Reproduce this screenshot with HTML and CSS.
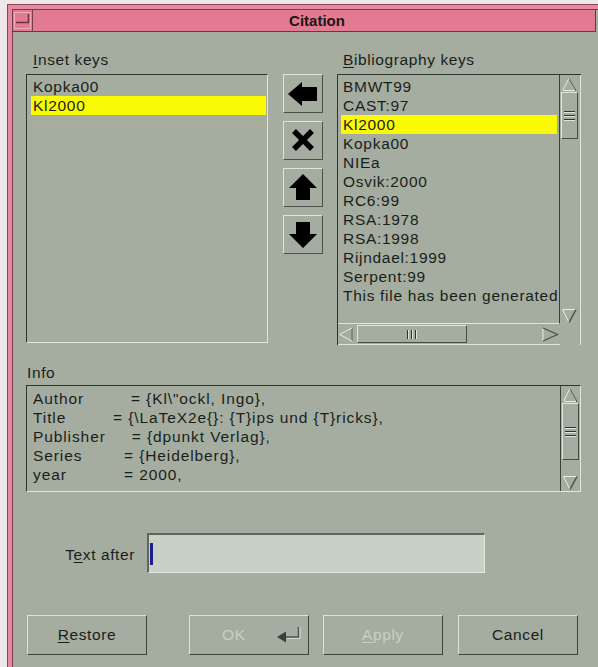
FILE: index.html
```html
<!DOCTYPE html>
<html lang="en">
<head>
<meta charset="utf-8">
<title>Citation</title>
<link rel="stylesheet" href="styles.css">
</head>
<body>
<div class="frame">
  <div class="window">
    <div class="titlebar">
      <div class="menu-btn">
        <svg width="19" height="21" viewBox="0 0 19 21">
          <rect x="1.5" y="2.5" width="16" height="16" fill="none" stroke="#f3a8b8"/>
          <path d="M3 12.5H16M15.5 4V12.5" stroke="#6e3444" stroke-width="1.5" fill="none"/>
        </svg>
      </div>
      <div class="title">Citation</div>
    </div>

    <div class="client">
      <div class="lists">
        <div class="inset-col">
          <div class="label"><u>I</u>nset keys</div>
          <div class="listbox inset">
            <div class="item">Kopka00</div>
            <div class="item sel">Kl2000</div>
            <div class="ghost-line"></div>
          </div>
        </div>

        <div class="tools">
          <button class="tool" type="button" aria-label="Add">
            <svg width="38" height="37" viewBox="0 0 38 37"><path d="M4 19L18 7V12H33V26H18V31Z" fill="#000"/></svg>
          </button>
          <button class="tool" type="button" aria-label="Delete">
            <svg width="38" height="37" viewBox="0 0 38 37"><path d="M10 9L28 27M28 9L10 27" stroke="#000" stroke-width="5.5" fill="none"/></svg>
          </button>
          <button class="tool" type="button" aria-label="Up">
            <svg width="38" height="37" viewBox="0 0 38 37"><path d="M19 5L33 19H26V31H12V19H5Z" fill="#000"/></svg>
          </button>
          <button class="tool" type="button" aria-label="Down">
            <svg width="38" height="37" viewBox="0 0 38 37"><path d="M19 32L33 18H26V6H12V18H5Z" fill="#000"/></svg>
          </button>
        </div>

        <div class="bib-col">
          <div class="label"><u>B</u>ibliography keys</div>
          <div class="scrollbox">
            <div class="listbox bib">
              <div class="item">BMWT99</div>
              <div class="item">CAST:97</div>
              <div class="item sel">Kl2000</div>
              <div class="item">Kopka00</div>
              <div class="item">NIEa</div>
              <div class="item">Osvik:2000</div>
              <div class="item">RC6:99</div>
              <div class="item">RSA:1978</div>
              <div class="item">RSA:1998</div>
              <div class="item">Rijndael:1999</div>
              <div class="item">Serpent:99</div>
              <div class="item">This file has been generated</div>
            </div>
            <div class="vscroll">
              <svg class="arrow" width="16" height="15" viewBox="0 0 16 15"><path d="M1.5 14V13.5L8 1.5" stroke="#e6ece3" fill="none"/><path d="M1.5 13.5H15L8 1.5" stroke="#5a6258" fill="none"/><path d="M2 13.5H14" stroke="#e6ece3"/></svg>
              <div class="thumb v"><span></span><span></span><span></span></div>
              <div class="trough"></div>
              <svg class="arrow" width="16" height="17" viewBox="0 0 16 17"><path d="M1.5 2.5H15" stroke="#e6ece3" fill="none"/><path d="M1.5 2.5L8 15.5" stroke="#e6ece3" fill="none"/><path d="M15 2.5L8 15.5" stroke="#4a5248" stroke-width="1.5" fill="none"/></svg>
            </div>
            <div class="hscroll">
              <svg class="arrow" width="15" height="17" viewBox="0 0 15 17"><path d="M14 2V15" stroke="#5a6258"/><path d="M14 2L1.5 8.5L14 15" stroke="#e6ece3" fill="none"/></svg>
              <div class="thumb h"><span></span><span></span><span></span></div>
              <div class="trough"></div>
              <svg class="arrow" width="18" height="17" viewBox="0 0 18 17"><path d="M2 2V15" stroke="#e6ece3"/><path d="M2 2L16.5 8.5L2 15" stroke="#4a5248" stroke-width="1.3" fill="none"/></svg>
            </div>
            <div class="corner"></div>
          </div>
        </div>
      </div>

      <div class="info">
        <div class="label">Info</div>
        <div class="infobox">
          <div class="infotext">Author         = {Kl\"ockl, Ingo},
Title         = {\LaTeX2e{}: {T}ips und {T}ricks},
Publisher     = {dpunkt Verlag},
Series        = {Heidelberg},
year           = 2000,</div>
          <div class="vscroll info-scroll">
            <svg class="arrow" width="16" height="16" viewBox="0 0 16 16"><path d="M1.5 14.5L8 1.5" stroke="#e6ece3" fill="none"/><path d="M8 1.5L15 14.5H1.5" stroke="#5a6258" fill="none"/><path d="M2 14.5H14" stroke="#e6ece3"/></svg>
            <div class="thumb v tall"><span></span><span></span><span></span></div>
            <div class="trough"></div>
            <svg class="arrow" width="16" height="16" viewBox="0 0 16 16"><path d="M1.5 1.5H15" stroke="#e6ece3" fill="none"/><path d="M1.5 1.5L8 14.5" stroke="#e6ece3" fill="none"/><path d="M15 1.5L8 14.5" stroke="#4a5248" stroke-width="1.5" fill="none"/></svg>
          </div>
        </div>
      </div>

      <div class="textafter">
        <label class="ta-label" for="after">T<u>e</u>xt after</label>
        <div class="field" id="after"><span class="caret"></span></div>
      </div>

      <div class="actions">
        <button class="btn restore" type="button"><u>R</u>estore</button>
        <button class="btn ok disabled" type="button">
          <span>OK</span>
          <svg class="ret" width="28" height="18" viewBox="0 0 28 18"><path d="M1 12L10 6.5V17.5Z" fill="#3c403c"/><path d="M10 12H22.5V2" stroke="#505650" stroke-width="1.6" fill="none"/><path d="M11 13.5H24V2" stroke="#d6ddd3" stroke-width="1" fill="none"/></svg>
        </button>
        <button class="btn apply disabled" type="button"><u>A</u>pply</button>
        <button class="btn cancel" type="button">Cancel</button>
      </div>
    </div>
  </div>
</div>
</body>
</html>
```

FILE: styles.css
```css
* { box-sizing: border-box; }

html, body {
  margin: 0;
  height: 100%;
}

body {
  background: #eee8ea;
  overflow: hidden;
  font-family: "Liberation Sans", Arial, sans-serif;
}

/* window manager frame */
.frame {
  margin: 4px 0 0 7px;
  width: 591px;
  height: 663px;
  overflow: hidden;
  background: #e48aa0;
  border-top: 1px solid #8e4759;
  border-left: 1px solid #8e4759;
  padding: 4px 0 0 4px;
}

.window {
  height: 100%;
  background: #a5ada1;
  border-top: 1px solid #7d3a4c;
  border-left: 1px solid #7d3a4c;
}

.titlebar {
  width: 583px;
  height: 22px;
  display: flex;
  background: #e27a91;
  border-bottom: 1px solid #6e3444;
  border-right: 1px solid #6e3444;
}

.menu-btn {
  width: 20px;
  height: 21px;
  border-right: 1px solid #7d3a4c;
}

.menu-btn svg { display: block; }

.title {
  flex: 1;
  text-align: center;
  font-weight: bold;
  font-size: 15px;
  line-height: 21px;
  color: #1e1416;
  padding-left: 6px;
}

/* dialog body */
.client {
  padding: 18px 0 0 13px;
  font-size: 15.5px;
  letter-spacing: 0.6px;
  color: #1a1e1a;
}

.label {
  height: 20px;
  line-height: 20px;
  margin-bottom: 4px;
  white-space: nowrap;
}

u { text-decoration-thickness: 1px; text-underline-offset: 2px; }

.lists {
  display: flex;
  align-items: flex-start;
}

.inset-col { width: 242px; }
.inset-col .label { padding-left: 7px; }

.listbox {
  overflow: hidden;
}

.listbox.inset {
  height: 269px;
  border: 1px solid;
  border-color: #2e342e #dfe6dc #dfe6dc #2e342e;
  padding: 2px 1px 0 4px;
}

.item {
  height: 19px;
  line-height: 19px;
  padding-left: 2px;
  white-space: nowrap;
  overflow: hidden;
  letter-spacing: 0.7px;
}

.item.sel { background: #fafa04; }

.ghost-line {
  height: 1px;
  margin-top: 11px;
  background: #b0ae9c;
}

/* arrow tool buttons */
.tools {
  margin: 24px 0 0 15px;
  display: flex;
  flex-direction: column;
  gap: 8px;
}

.tool {
  width: 40px;
  height: 39px;
  padding: 0;
  border: 1px solid;
  border-color: #dde4da #4a524a #4a524a #dde4da;
  background: #a5ada1;
  display: flex;
  align-items: center;
  justify-content: center;
}

.tool svg { display: block; }

/* bibliography list with scrollbars */
.bib-col {
  margin-left: 14px;
  width: 244px;
}

.bib-col .label { padding-left: 6px; }

.scrollbox {
  display: grid;
  grid-template-columns: 222px 21px;
  grid-template-rows: 249px 21px;
  border-top: 1px solid #2e342e;
  border-left: 1px solid #2e342e;
}

.listbox.bib {
  border-right: 1px solid #3a403a;
  border-bottom: 1px solid #dfe6dc;
  padding: 2px 2px 0 3px;
}

.vscroll {
  display: flex;
  flex-direction: column;
  align-items: flex-start;
  padding: 2px 2px 0 1px;
  border-right: 1px solid #dfe6dc;
}

.vscroll .arrow { display: block; flex: none; }

.trough { flex: 1; }

.thumb {
  flex: none;
  border: 1px solid;
  border-color: #dfe6dc #444c44 #444c44 #dfe6dc;
  display: flex;
  align-items: center;
  justify-content: center;
  gap: 2px;
}

.thumb.v {
  width: 17px;
  height: 47px;
  flex-direction: column;
}

.thumb.v span {
  width: 11px;
  height: 2px;
  border-top: 1px solid #2e342e;
  border-bottom: 1px solid #e0e6dd;
}

.thumb.v.tall { height: 57px; }

.hscroll {
  display: flex;
  align-items: center;
  padding: 1px 1px 1px 0;
  border-bottom: 1px solid #dfe6dc;
}

.hscroll .arrow { display: block; flex: none; }

.thumb.h {
  width: 110px;
  height: 18px;
  margin-left: 4px;
}

.thumb.h span {
  width: 2px;
  height: 9px;
  border-left: 1px solid #2e342e;
  border-right: 1px solid #e0e6dd;
}

.corner { border-right: 1px solid #dfe6dc; }

/* info panel */
.info { margin-top: 18px; }
.info .label { padding-left: 1px; margin-bottom: 2px; }

.infobox {
  width: 555px;
  height: 107px;
  display: grid;
  grid-template-columns: 1fr 19px;
  border: 1px solid;
  border-color: #2e342e #dfe6dc #dfe6dc #2e342e;
}

.infotext {
  padding: 3px 0 0 6px;
  line-height: 19px;
  letter-spacing: 0.9px;
  white-space: pre;
  overflow: hidden;
  border-right: 1px solid #3a403a;
}

.info-scroll {
  padding: 1px 1px 0 1px;
  border-right: none;
}

/* text after field */
.textafter {
  margin-top: 41px;
  display: flex;
  align-items: center;
  height: 40px;
}

.ta-label {
  width: 121px;
  text-align: right;
  padding-right: 12px;
  padding-top: 3px;
  white-space: nowrap;
}

.field {
  width: 338px;
  height: 40px;
  background: #c9d0c6;
  border: 2px solid;
  border-color: #5f665d #e4eae2 #e4eae2 #5f665d;
  border-right-width: 1px;
  border-bottom-width: 1px;
  display: flex;
  align-items: center;
}

.caret {
  width: 3px;
  height: 22px;
  margin-left: 1px;
  background: #1f1f8a;
}

/* dialog buttons */
.actions {
  margin-top: 42px;
  display: flex;
  padding-left: 1px;
}

.btn {
  width: 120px;
  height: 40px;
  padding: 0;
  font: inherit;
  letter-spacing: 0.6px;
  color: #1a1e1a;
  background: #a5ada1;
  border: 1px solid;
  border-color: #dbe2d8 #3c443c #3c443c #dbe2d8;
  display: flex;
  align-items: center;
  justify-content: center;
}

.btn.disabled { color: #c9cfc6; }

.btn.ok {
  margin-left: 42px;
  justify-content: flex-start;
  padding-left: 32px;
}

.btn.ok .ret { margin-left: 30px; margin-top: -3px; }

.btn.apply { margin-left: 14px; }
.btn.cancel { margin-left: 15px; }
```
